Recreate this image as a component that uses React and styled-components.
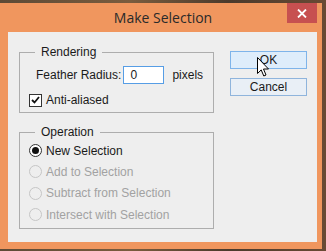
import React from "react";
import styled, { createGlobalStyle } from "styled-components";

const GlobalStyle = createGlobalStyle`
  html, body {
    margin: 0;
    padding: 0;
  }
  body {
    width: 326px;
    height: 251px;
    overflow: hidden;
    background: linear-gradient(90deg, #5d4a36 0%, #7a5c3e 40%, #4b3a2c 70%, #6a4a34 100%);
    font-family: "Liberation Sans", Arial, sans-serif;
  }
`;

const Window = styled.div`
  margin-top: 3px;
  width: 322px;
  height: 246px;
  background: #f0965e;
  display: flex;
  flex-direction: column;
  position: relative;
`;

const TitleBar = styled.div`
  height: 29px;
  display: flex;
  align-items: center;
  justify-content: center;
  position: relative;
`;

const Title = styled.span`
  font-family: "Open Sans", "Noto Sans", sans-serif;
  font-size: 14px;
  color: #2a2a2a;
  margin-left: 4px;
  margin-top: -1px;
`;

const CloseButton = styled.div`
  position: absolute;
  top: 0;
  right: 5px;
  width: 30px;
  height: 20px;
  background: #c75050;
  display: flex;
  align-items: center;
  justify-content: center;
`;

const Content = styled.div`
  margin: 0 5px 0 8px;
  height: 210px;
  background: #eeeeee;
  box-sizing: border-box;
  padding: 13px 0 0 11px;
  display: flex;
  gap: 16px;
  font-size: 12px;
  color: #1a1a1a;
`;

const Column = styled.div`
  width: 195px;
  display: flex;
  flex-direction: column;
  gap: 12px;
`;

const Group = styled.fieldset`
  margin: 0;
  padding: 0;
  border: 1px solid #adadad;
  min-width: 0;
`;

const Legend = styled.legend`
  margin-left: 15px;
  padding: 0 6px;
  line-height: 14px;
`;

const GroupBody = styled.div`
  display: flex;
  flex-direction: column;
  padding: ${(p) => p.$padding};
  gap: ${(p) => p.$gap}px;
`;

const Row = styled.div`
  display: flex;
  align-items: center;
  height: ${(p) => p.$height}px;
  padding-left: ${(p) => p.$indent}px;
  color: ${(p) => (p.$disabled ? "#a2a2a2" : "#1a1a1a")};
`;

const Input = styled.div`
  width: 41px;
  height: 18px;
  box-sizing: border-box;
  border: 1px solid #569de5;
  background: #ffffff;
  margin: 0 8px 0 2px;
  padding-left: 6px;
  display: flex;
  align-items: center;
`;

const CheckBox = styled.span`
  width: 13px;
  height: 13px;
  box-sizing: border-box;
  border: 1px solid #333333;
  background: #ffffff;
  margin-right: 4px;
  display: flex;
  align-items: center;
  justify-content: center;
`;

const Radio = styled.span`
  width: 13px;
  height: 13px;
  box-sizing: border-box;
  border-radius: 50%;
  border: 1px solid ${(p) => (p.$disabled ? "#c6c6c6" : "#333333")};
  background: ${(p) => (p.$disabled ? "#eeeeee" : "#ffffff")};
  margin-right: 4px;
  display: flex;
  align-items: center;
  justify-content: center;

  &::after {
    content: "";
    display: ${(p) => (p.$checked ? "block" : "none")};
    width: 7px;
    height: 7px;
    border-radius: 50%;
    background: #111111;
  }
`;

const Buttons = styled.div`
  padding-top: 6px;
  display: flex;
  flex-direction: column;
  gap: 9px;
`;

const Button = styled.div`
  width: 77px;
  height: 18px;
  box-sizing: border-box;
  border: 1px solid ${(p) => (p.$primary ? "#7eb4ea" : "#8fb4dc")};
  background: ${(p) => (p.$primary ? "#deedfb" : "#e9eff6")};
  display: flex;
  align-items: center;
  justify-content: center;
  font-size: 12px;
  color: #1a1a1a;
`;

const Cursor = styled.svg`
  position: absolute;
  left: 257px;
  top: 54px;
`;

const radios = [
  { label: "New Selection", checked: true },
  { label: "Add to Selection", disabled: true },
  { label: "Subtract from Selection", disabled: true },
  { label: "Intersect with Selection", disabled: true },
];

export default function App() {
  return (
    <>
      <GlobalStyle />
      <Window>
        <TitleBar>
          <Title>Make Selection</Title>
          <CloseButton>
            <svg width="10" height="9" viewBox="0 0 10 9">
              <path d="M1 0.5 L9 8.5 M9 0.5 L1 8.5" stroke="#ffffff" strokeWidth="1.8" />
            </svg>
          </CloseButton>
        </TitleBar>
        <Content>
          <Column>
            <Group>
              <Legend>Rendering</Legend>
              <GroupBody $padding="7px 0 5px 0" $gap={9}>
                <Row $height={18} $indent={16}>
                  Feather Radius:
                  <Input>0</Input>
                  pixels
                </Row>
                <Row $height={14} $indent={9}>
                  <CheckBox>
                    <svg width="9" height="8" viewBox="0 0 9 8">
                      <path d="M1 4 L3.5 6.5 L8 1" fill="none" stroke="#111" strokeWidth="1.8" />
                    </svg>
                  </CheckBox>
                  Anti-aliased
                </Row>
              </GroupBody>
            </Group>
            <Group>
              <Legend>Operation</Legend>
              <GroupBody $padding="1px 0 3px 0" $gap={0}>
                {radios.map((r) => (
                  <Row key={r.label} $height={21.3} $indent={9} $disabled={r.disabled}>
                    <Radio $checked={r.checked} $disabled={r.disabled} />
                    {r.label}
                  </Row>
                ))}
              </GroupBody>
            </Group>
          </Column>
          <Buttons>
            <Button $primary>OK</Button>
            <Button>Cancel</Button>
          </Buttons>
        </Content>
        <Cursor width="13" height="21" viewBox="0 0 13 21">
          <path
            d="M0.5 0.5 L0.5 16.5 L4.2 12.9 L6.8 19 L9 18 L6.5 12 L11.5 12 Z"
            fill="#ffffff"
            stroke="#000000"
            strokeWidth="1"
            strokeLinejoin="round"
          />
        </Cursor>
      </Window>
    </>
  );
}
